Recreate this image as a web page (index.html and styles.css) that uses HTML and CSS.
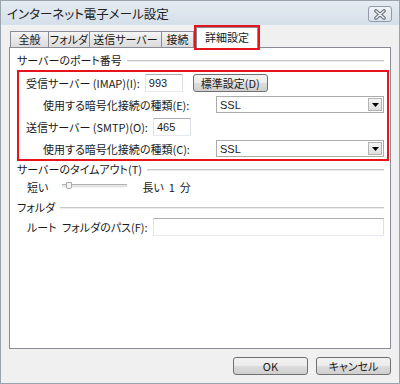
FILE: index.html
```html
<!DOCTYPE html>
<html lang="ja">
<head>
    <meta charset="UTF-8">
    <meta name="viewport" content="width=device-width, initial-scale=1.0">
    <title>インターネット電子メール設定</title>
    <link rel="stylesheet" href="styles.css">
</head>
<body>
    <div class="window">
        <!-- タイトルバー -->
        <div class="titlebar">
            <span class="title">インターネット電子メール設定</span>
            <div class="close-btn">
                <svg width="14" height="11" viewBox="0 0 14 11">
                    <path d="M3 2 L11 9 M11 2 L3 9" stroke="#5f6b78" stroke-width="3.6" stroke-linecap="round" fill="none"/>
                    <path d="M3 2 L11 9 M11 2 L3 9" stroke="#f4f6f9" stroke-width="1.4" stroke-linecap="round" fill="none"/>
                </svg>
            </div>
        </div>

        <div class="client">
            <!-- タブ -->
            <div class="tabs">
                <div class="tab w-general">全般</div>
                <div class="tab w-folder">フォルダ</div>
                <div class="tab w-send">送信サーバー</div>
                <div class="tab w-conn">接続</div>
                <div class="tab active">詳細設定</div>
            </div>

            <div class="panel">
                <div class="group-title">サーバーのポート番号</div>

                <div class="highlight">
                    <div class="row">
                        <span>受信サーバー (IMAP)(I):</span>
                        <div class="textbox port">993</div>
                        <div class="btn btn-default">標準設定(D)</div>
                    </div>
                    <div class="row indent">
                        <span>使用する暗号化接続の種類(E):</span>
                        <div class="select">
                            <span>SSL</span>
                            <div class="select-arrow">
                                <svg width="7" height="4" viewBox="0 0 7 4"><path d="M0 0 H7 L3.5 4 Z" fill="#000"/></svg>
                            </div>
                        </div>
                    </div>
                    <div class="row">
                        <span>送信サーバー (SMTP)(O):</span>
                        <div class="textbox port">465</div>
                    </div>
                    <div class="row indent">
                        <span>使用する暗号化接続の種類(C):</span>
                        <div class="select">
                            <span>SSL</span>
                            <div class="select-arrow">
                                <svg width="7" height="4" viewBox="0 0 7 4"><path d="M0 0 H7 L3.5 4 Z" fill="#000"/></svg>
                            </div>
                        </div>
                    </div>
                </div>

                <div class="group-title">サーバーのタイムアウト(T)</div>
                <div class="timeout-row">
                    <span>短い</span>
                    <div class="slider">
                        <div class="slider-thumb"></div>
                    </div>
                    <span>長い&nbsp;&nbsp;1&nbsp;&nbsp;分</span>
                </div>

                <div class="group-title folder">フォルダ</div>
                <div class="path-row">
                    <span class="path-label">ルート フォルダのパス(F):</span>
                    <div class="textbox path"></div>
                </div>
            </div>

            <!-- 下部ボタン -->
            <div class="footer">
                <div class="btn">OK</div>
                <div class="btn">キャンセル</div>
            </div>
        </div>
    </div>
</body>
</html>
```

FILE: styles.css
```css
body {
    margin: 0;
    font-family: "Noto Sans CJK JP", "Liberation Sans", sans-serif;
    font-size: 11px;
    font-feature-settings: "palt" 1;
    color: #1a1a1a;
    background: #f0f0f0;
}

.window {
    width: 400px;
    height: 384px;
    box-sizing: border-box;
    border: 1px solid #9aa4ae;
    display: flex;
    flex-direction: column;
    background: #f0f0f0;
}

/* タイトルバー */
.titlebar {
    height: 24px;
    display: flex;
    align-items: center;
    justify-content: space-between;
    padding: 0 7px 0 6px;
    background: linear-gradient(#e4ebf2, #d5dfe9);
}

.title {
    font-size: 12.5px;
    line-height: 16px;
    color: #222;
    margin-top: 1px;
}

.close-btn {
    width: 22px;
    height: 14px;
    border: 1px solid #8f9bab;
    border-radius: 3px;
    background: linear-gradient(#f1f4f8, #dbe2ea);
    display: flex;
    align-items: center;
    justify-content: center;
    margin-top: 2px;
}

.client {
    flex: 1;
    display: flex;
    flex-direction: column;
    padding: 3px 8px 8px 8px;
}

/* タブ */
.tabs {
    display: flex;
    align-items: flex-end;
    height: 20px;
    padding-left: 1px;
    margin-bottom: -1px;
    position: relative;
    z-index: 1;
}

.tab {
    height: 15px;
    line-height: 15px;
    box-sizing: content-box;
    margin-bottom: 1px;
    border: 1px solid #898c95;
    border-bottom: none;
    border-right: none;
    background: linear-gradient(#f6f6f6, #e6e6e6 55%, #dcdcdc);
    color: #1a1a1a;
    text-align: center;
    white-space: nowrap;
}

.w-general { width: 37px; }
.w-folder { width: 40px; }
.w-send { width: 71px; }
.w-conn { width: 31px; border-right: 1px solid #898c95; }

.tab.active {
    width: 60px;
    height: 20px;
    line-height: 18px;
    margin: 0 0 0 2px;
    border-right: 1px solid #898c95;
    background: #fff;
    outline: 2px solid #e8141b;
    outline-offset: 0;
}

.panel {
    flex: 1;
    background: #fff;
    border: 1px solid #898c95;
    padding: 4px 6px 0 7px;
}

/* グループ見出し */
.group-title {
    display: flex;
    align-items: center;
    height: 16px;
    line-height: 16px;
}

.group-title::after {
    content: "";
    flex: 1;
    height: 1px;
    margin-left: 5px;
    margin-top: 1px;
    background: #c8c8c8;
    border-bottom: 1px solid #ececec;
}

.group-title.folder {
    margin-top: 4px;
}

/* 赤枠 */
.highlight {
    margin: 2px -5px 0 0;
    border: 2px solid #e8141b;
    padding: 1px 3px 1px 7px;
    display: flex;
    flex-direction: column;
    gap: 3px;
}

.row {
    display: flex;
    align-items: center;
    height: 19px;
}

.row.indent {
    padding-left: 17px;
}

.path-label {
    white-space: nowrap;
    word-spacing: 3px;
}

.textbox {
    height: 16px;
    box-sizing: content-box;
    border: 1px solid #abadb3;
    border-bottom-color: #e3e9ef;
    border-left-color: #e2e3ea;
    border-right-color: #dbdfe6;
    background: #fff;
    line-height: 16px;
    padding: 0 3px;
    font-family: "Liberation Sans", "Noto Sans CJK JP", sans-serif;
    font-size: 11px;
}

.textbox.port {
    width: 30px;
    margin-left: 5px;
}

.textbox.path {
    flex: 1;
    margin-left: 5px;
}

.select {
    width: 162px;
    height: 15px;
    margin-left: auto;
    border: 1px solid #acacac;
    padding: 0 1px 0 3px;
    display: flex;
    align-items: center;
    justify-content: space-between;
    background: #fff;
    font-family: "Liberation Sans", "Noto Sans CJK JP", sans-serif;
    font-size: 11px;
}

.select-arrow {
    width: 14px;
    height: 13px;
    border: 1px solid #b4b4b4;
    background: linear-gradient(#f4f4f4, #dedede);
    display: flex;
    align-items: center;
    justify-content: center;
    box-sizing: border-box;
}

.btn {
    width: 75px;
    height: 18px;
    box-sizing: border-box;
    border: 1px solid #707070;
    border-radius: 3px;
    background: linear-gradient(#f2f2f2, #ebebeb 50%, #dddddd 50%, #cfcfcf);
    display: flex;
    align-items: center;
    justify-content: center;
    line-height: 14px;
}

.btn-default {
    margin-left: 10px;
}

/* タイムアウト */
.timeout-row {
    display: flex;
    align-items: center;
    height: 16px;
    margin-top: 2px;
    padding-left: 10px;
}

.slider {
    position: relative;
    width: 65px;
    height: 2px;
    margin: -3px 15px 0 14px;
    background: #e4e4e4;
    border-top: 1px solid #b2b2b2;
    border-bottom: 1px solid #f4f4f4;
}

.slider-thumb {
    position: absolute;
    left: 4px;
    top: -3px;
    width: 4px;
    height: 5px;
    border: 1px solid #a9a9a9;
    border-radius: 0 0 2px 2px;
    background: #f4f4f4;
}

.path-row {
    display: flex;
    align-items: center;
    height: 18px;
    margin-top: 3px;
    padding-left: 10px;
}

.footer {
    display: flex;
    justify-content: flex-end;
    gap: 8px;
    padding-top: 8px;
}
```
